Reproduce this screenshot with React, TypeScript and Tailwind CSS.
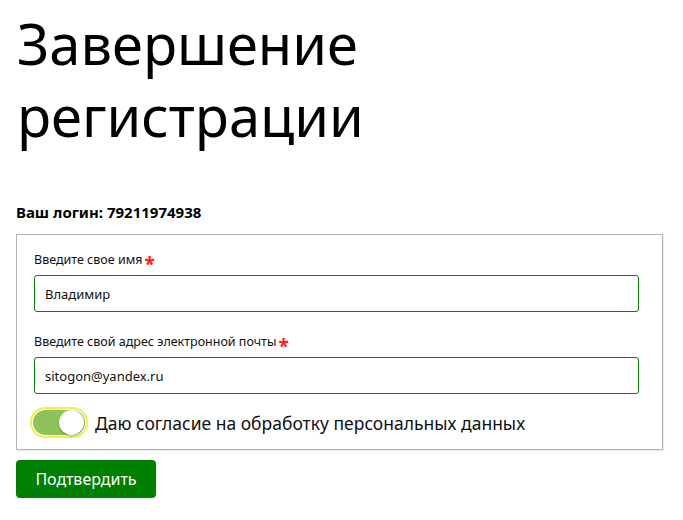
import { useState } from "react";

const font = { fontFamily: '"Noto Sans", "Open Sans", sans-serif' };

function Toggle({ on, onChange }: { on: boolean; onChange: (v: boolean) => void }) {
  return (
    <button
      type="button"
      onClick={() => onChange(!on)}
      className="w-[58px] h-[31px] shrink-0 rounded-full border-2 border-[#f2ef4a] p-[1px] flex items-center"
    >
      <span className={`w-full h-full rounded-full flex items-center px-[1px] ${on ? "bg-[#8dc45a] justify-end" : "bg-[#cfcfcf] justify-start"}`}>
        <span className="w-[25px] h-[25px] rounded-full bg-white shadow-[0_1px_2px_rgba(0,0,0,0.35)]" />
      </span>
    </button>
  );
}

function Field({ label, value }: { label: string; value: string }) {
  return (
    <div className="flex flex-col">
      <label className="text-[12.5px] leading-[16px] text-[#111] mb-[7px] flex items-center">
        {label}
        <span className="text-[#ff1a1a] text-[19px] font-bold leading-[10px] ml-[2px] translate-y-[4px]">*</span>
      </label>
      <input
        defaultValue={value}
        className="h-[37px] w-full rounded-[3px] border border-[#0a7d0a] px-[10px] text-[13px] text-[#111] outline-none"
        style={font}
      />
    </div>
  );
}

export default function App() {
  const [agree, setAgree] = useState(true);
  return (
    <div className="min-h-[520px] bg-white px-4 pt-[7px] text-black" style={font}>
      <h1 className="text-[56px] leading-[72px] font-normal ml-[1px]">Завершение регистрации</h1>
      <div className="mt-[51px] text-[15px] font-bold leading-[20px]">Ваш логин: 79211974938</div>
      <div className="mt-[12px] mr-[4px] border border-[#b3b3b3] shadow-[1px_1px_1px_rgba(0,0,0,0.08)] pl-[17px] pr-[23px] pt-[17px] pb-[11px] flex flex-col gap-[25px]">
        <Field label="Введите свое имя" value="Владимир" />
        <div className="flex flex-col gap-[13px] -mt-[3px]">
          <Field label="Введите свой адрес электронной почты" value="sitogon@yandex.ru" />
          <div className="flex items-center gap-[7px] -ml-[4px]">
            <Toggle on={agree} onChange={setAgree} />
            <span className="text-[17.5px] leading-[24px] text-[#111]">Даю согласие на обработку персональных данных</span>
          </div>
        </div>
      </div>
      <button className="mt-[10px] h-[38px] w-[140px] rounded-[4px] bg-[#008000] text-white text-[16px]">Подтвердить</button>
    </div>
  );
}
